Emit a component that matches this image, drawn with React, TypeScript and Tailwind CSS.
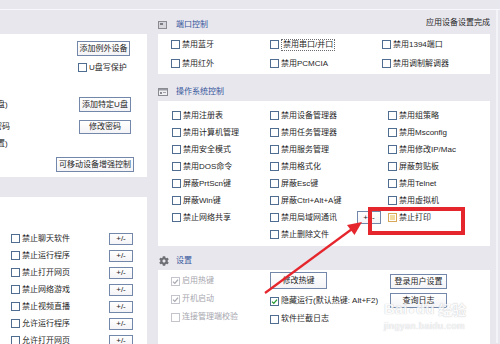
import type { ReactNode } from 'react'
import { FaCog } from 'react-icons/fa'

type BoxKind = 'off' | 'on' | 'grayOn' | 'grayOff' | 'hover'

function Box({ kind = 'off' }: { kind?: BoxKind }) {
  const border =
    kind === 'grayOn' || kind === 'grayOff'
      ? 'border-[#c4c4cc]'
      : kind === 'hover'
        ? 'border-[#d9a75a] bg-[#fbefc9]'
        : 'border-[#4f6d90]'
  return (
    <span className={`flex h-[9px] w-[9px] shrink-0 items-center justify-center border bg-white ${border}`}>
      {kind === 'hover' && <span className="h-[5px] w-[5px] bg-[#f3dc9f]" />}
      {(kind === 'on' || kind === 'grayOn') && (
        <svg width="7" height="7" viewBox="0 0 7 7" fill="none">
          <path
            d="M1 3.6 2.8 5.4 6 1.6"
            stroke={kind === 'on' ? '#1f9a2a' : '#a8a8b0'}
            strokeWidth="1.3"
          />
        </svg>
      )}
    </span>
  )
}

function Check({ label, kind, focus, dim }: { label: string; kind?: BoxKind; focus?: boolean; dim?: boolean }) {
  return (
    <div className="flex h-[17px] items-center gap-[2px] whitespace-nowrap">
      <Box kind={kind} />
      <span
        className={`${focus ? 'border border-dotted border-[#6a6a70] px-[1px] py-[1px]' : ''} ${dim ? 'text-[#a6a6ae]' : ''}`}
      >
        {label}
      </span>
    </div>
  )
}

function Btn({ children, className = '' }: { children: ReactNode; className?: string }) {
  return (
    <button
      type="button"
      className={`flex shrink-0 items-center justify-center border border-[#7287a9] bg-gradient-to-b from-white to-[#f4f4f7] text-[8px] leading-none text-[#1e1e1e] ${className}`}
    >
      {children}
    </button>
  )
}

function PortIcon() {
  return (
    <svg width="9" height="8" viewBox="0 0 9 8">
      <rect x="0.5" y="0.5" width="8" height="7" fill="#d6d6dc" stroke="#8a8a92" />
      <rect x="2" y="2" width="3" height="2" fill="#7d7d86" />
    </svg>
  )
}

function OsIcon() {
  return (
    <svg width="10" height="8" viewBox="0 0 10 8">
      <rect x="0.5" y="0.5" width="9" height="7" fill="#efeff2" stroke="#8a8a92" />
      <rect x="1" y="1" width="8" height="1.5" fill="#9a9aa2" />
      <rect x="2" y="4" width="2" height="2" fill="#8a8a92" />
      <rect x="5" y="4" width="3" height="1" fill="#a0a0a8" />
    </svg>
  )
}

const osRows: [string, string, string][] = [
  ['禁用注册表', '禁用设备管理器', '禁用组策略'],
  ['禁用计算机管理', '禁用任务管理器', '禁用Msconfig'],
  ['禁用安全模式', '禁用服务管理', '禁用修改IP/Mac'],
  ['禁用DOS命令', '禁用格式化', '屏蔽剪贴板'],
  ['屏蔽PrtScn键', '屏蔽Esc键', '禁用Telnet'],
  ['屏蔽Win键', '屏蔽Ctrl+Alt+A键', '禁用虚拟机'],
  ['禁止网络共享', '禁用局域网通讯', '禁止打印'],
  ['', '禁止删除文件', ''],
]

const leftRows = ['禁止聊天软件', '禁止运行程序', '禁止打开网页', '禁止网络游戏', '禁止视频直播', '允许运行程序', '允许打开网页']

export default function App() {
  return (
    <div className="relative h-[344px] w-[500px] overflow-hidden bg-[#e9e7ee] font-['Liberation_Sans','Noto_Sans_CJK_SC',sans-serif] text-[8px] leading-none text-[#1f1f1f]">
      <div className="h-[10px] border-b border-[#f8f7fb]" />
      <div className="flex">
        {/* left column */}
        <div className="flex w-[147px] shrink-0 flex-col">
          <div className="mt-[24px] flex h-[143px] flex-col bg-white pt-[7px]">
            <div className="flex h-[15px] justify-end pr-[17px]">
              <Btn className="h-[15px] w-[53px]">添加例外设备</Btn>
            </div>
            <div className="mt-[7px] flex h-[9px] items-center gap-[2px] pl-[78px]">
              <Box />
              <span>U盘写保护</span>
            </div>
            <div className="mt-[25px] flex h-[15px] items-center">
              <span className="ml-[-3px]">盘)</span>
              <Btn className="ml-auto mr-[16px] h-[15px] w-[52px]">添加特定U盘</Btn>
            </div>
            <div className="mt-[8px] flex h-[14px] items-center">
              <span className="ml-[-6px]">密码</span>
              <Btn className="ml-auto mr-[16px] h-[14px] w-[52px]">修改密码</Btn>
            </div>
            <div className="mt-[4px] flex h-[12px] items-center">
              <span className="ml-[-3px]">置)</span>
            </div>
            <div className="mt-[7px] flex h-[15px] justify-end pr-[13px]">
              <Btn className="h-[15px] w-[78px]">可移动设备增强控制</Btn>
            </div>
          </div>
          <div className="mt-[20px] flex h-[200px] flex-col bg-white pt-[33px]">
            {leftRows.map((label) => (
              <div key={label} className="flex h-[17px] items-center gap-[2px] pl-[11px]">
                <Box />
                <span>{label}</span>
                <Btn className="ml-auto mr-[14px] h-[12px] w-[24px]">+/-</Btn>
              </div>
            ))}
          </div>
        </div>

        {/* right column */}
        <div className="ml-[11px] flex w-[332px] shrink-0 flex-col">
          <div className="flex h-[24px] items-center pt-[6px]">
            <PortIcon />
            <span className="ml-[9px] text-[#34569a]">端口控制</span>
            <span className="mb-[5px] ml-auto">应用设备设置完成</span>
          </div>
          <div className="grid h-[40px] grid-cols-[99px_112px_1fr] bg-white pl-[13px] pt-[2px]">
            <Check label="禁用蓝牙" />
            <Check label="禁用串口/并口" focus />
            <Check label="禁用1394端口" />
            <Check label="禁用红外" />
            <Check label="禁用PCMCIA" />
            <Check label="禁用调制解调器" />
          </div>

          <div className="flex h-[27px] items-center pt-[9px]">
            <OsIcon />
            <span className="ml-[8px] text-[#34569a]">操作系统控制</span>
          </div>
          <div className="grid h-[145px] auto-rows-[17px] grid-cols-[98px_118px_1fr] content-start bg-white pl-[14px] pt-[6px]">
            {osRows.flatMap((row, r) =>
              row.map((label, c) => {
                if (!label) return <div key={`${r}-${c}`} />
                if (label === '禁用局域网通讯') {
                  return (
                    <div key={label} className="flex items-center">
                      <Check label={label} />
                      <Btn className="ml-auto mr-[7px] h-[13px] w-[24px] gap-[4px]">
                        <span>+</span>
                        <span>-</span>
                      </Btn>
                    </div>
                  )
                }
                return <Check key={label} label={label} kind={label === '禁止打印' ? 'hover' : 'off'} />
              }),
            )}
          </div>

          <div className="flex h-[24px] items-center pt-[6px]">
            <FaCog className="ml-[1px] h-[10px] w-[10px] text-[#6f6f76]" />
            <span className="ml-[7px] text-[#34569a]">设置</span>
          </div>
          <div className="flex h-[80px] bg-white pl-[13px]">
            <div className="flex w-[99px] flex-col pt-[2px]">
              <div className="flex h-[18px] items-center">
                <Check label="启用热键" kind="grayOn" dim />
              </div>
              <div className="flex h-[18px] items-center">
                <Check label="开机启动" kind="grayOn" dim />
              </div>
              <div className="flex h-[18px] items-center">
                <Check label="连接管理端校验" kind="grayOff" dim />
              </div>
            </div>
            <div className="flex w-[120px] flex-col pt-[2px]">
              <Btn className="h-[17px] w-[57px]">修改热键</Btn>
              <div className="mt-[3px] flex h-[18px] items-center">
                <Check label="隐藏运行(默认热键: Alt+F2)" kind="on" />
              </div>
              <div className="flex h-[18px] items-center">
                <Check label="软件拦截日志" />
              </div>
            </div>
            <div className="flex flex-col pt-[4px]">
              <Btn className="h-[15px] w-[57px]">登录用户设置</Btn>
              <Btn className="mt-[4px] h-[15px] w-[57px]">查询日志</Btn>
            </div>
          </div>
        </div>
        <div className="ml-[6px] h-[333px] w-[2px] bg-[#f4f3f8]" />
      </div>

      {/* watermark */}
      <div className="pointer-events-none absolute left-[384px] top-[301px] flex flex-col items-start text-[#fbfbfc] opacity-80 [text-shadow:0_0_1px_#a4a4ac]">
        <div className="flex items-end text-[15px] font-bold leading-none">
          <span>Bai</span>
          <span className="mx-[1px] text-[11px]">●</span>
          <span>du</span>
          <span className="ml-[4px] font-['Noto_Sans_CJK_SC',sans-serif] text-[14px]">经验</span>
        </div>
        <span className="mt-[6px] text-[9px] tracking-[0.5px]">jingyan.baidu.com</span>
      </div>

      {/* red annotation box */}
      <div className="pointer-events-none absolute left-[368px] top-[207px] h-[28px] w-[97px] border-[4px] border-[#e6262d]" />

      {/* red arrow */}
      <svg className="pointer-events-none absolute left-0 top-0" width="500" height="344" viewBox="0 0 500 344">
        <line x1="265" y1="293" x2="352" y2="229" stroke="#e6262d" strokeWidth="2.2" />
        <polygon points="362,222 354.5,235 347,225" fill="#e6262d" />
      </svg>
    </div>
  )
}
